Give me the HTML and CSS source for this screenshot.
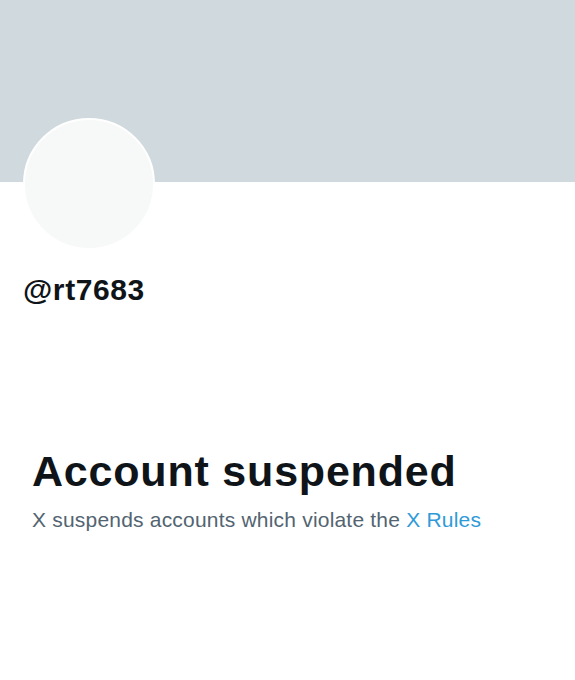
FILE: index.html
```html
<!DOCTYPE html>
<html lang="en">

<head>
    <meta charset="UTF-8">
    <meta name="viewport" content="width=device-width, initial-scale=1.0">
    <title>@rt7683</title>
    <link rel="stylesheet" href="styles.css">
</head>

<body>
    <div class="page">
        <div class="banner"></div>
        <div class="profile">
            <div class="avatar"></div>
            <div class="handle">@rt7683</div>
        </div>
        <div class="notice">
            <h1 class="notice-title">Account suspended</h1>
            <p class="notice-text">X suspends accounts which violate the <a href="#" class="notice-link">X Rules</a></p>
        </div>
    </div>
</body>

</html>
```

FILE: styles.css
```css
* {
    margin: 0;
    padding: 0;
    box-sizing: border-box;
}

body {
    background: #fff;
    font-family: "Liberation Sans", Arial, sans-serif;
    color: #0f1419;
}

.page {
    display: flex;
    flex-direction: column;
    min-height: 100vh;
}

.banner {
    height: 182px;
    background: #cfd9de;
}

.profile {
    display: flex;
    flex-direction: column;
    align-items: flex-start;
    padding: 0 23px;
}

.avatar {
    width: 132px;
    height: 132px;
    margin-top: -64px;
    border-radius: 50%;
    border: 2px solid #fff;
    background: #f7f9f9;
}

.handle {
    margin-top: 22px;
    font-size: 30px;
    line-height: 36px;
    font-weight: 700;
    letter-spacing: 0.6px;
}

.notice {
    padding: 0 32px;
    margin-top: 137px;
}

.notice-title {
    font-size: 43px;
    line-height: 52px;
    font-weight: 700;
    letter-spacing: 0.8px;
}

.notice-text {
    margin-top: 9px;
    font-size: 21px;
    line-height: 28px;
    letter-spacing: 0.2px;
    color: #536471;
}

.notice-link {
    color: #2f9ad8;
    text-decoration: none;
}
```
